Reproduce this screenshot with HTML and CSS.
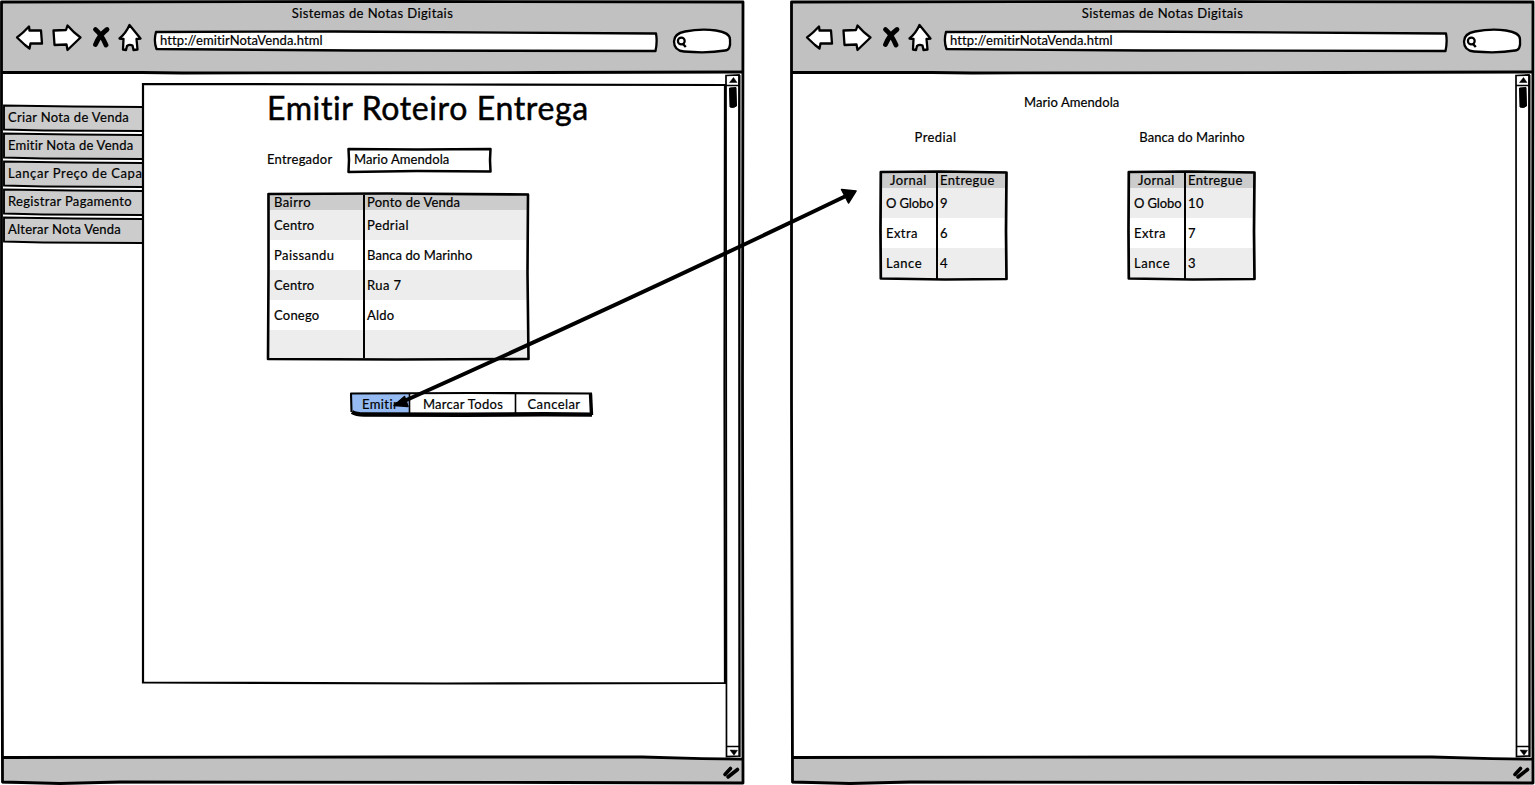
FILE: index.html
```
<!DOCTYPE html>
<html lang="pt-BR">
<head>
<meta charset="utf-8">
<title>Sistemas de Notas Digitais</title>
<link rel="stylesheet" href="styles.css">
</head>
<body>
<svg class="defs" width="0" height="0" aria-hidden="true">
  <defs>
    <symbol id="nav" viewBox="0 0 128 32" overflow="visible">
      <g fill="#fff" stroke="#000" stroke-width="2.3" stroke-linejoin="round" stroke-linecap="round">
        <path d="M2 16.500Q8 12 14 5.500L14.500 9.500 26 9.500 27 22.500 15.500 22.500 14.500 27.500 10 24Z"/>
        <path d="M38.500 9.500 51 9 52.500 4.500Q58 11 65.500 16.500L52.500 29 51.500 23.500 39.500 24Z"/>
        <path d="M104.500 17.500Q111 12 114.500 4L125.500 17.500 121.500 18 122.500 28.500 118.500 29 117.500 24.500Q114.500 23 112 25L111 29 108 28.500 108.500 18Z"/>
      </g>
      <path d="M80.500 8.500q6 5 10.500 15.500M92 8.500q-8 6-11.500 15" fill="none" stroke="#000" stroke-width="4.800" stroke-linecap="round"/>
    </symbol>
    <symbol id="url" viewBox="0 0 504 24" overflow="visible">
      <path d="M2 2 180 1.500 502 3.500q1.500 8-.5 17.500L200 20.500 2.500 19Q-.5 11 2 2Z" fill="#fff" stroke="#000" stroke-width="2.300" stroke-linejoin="round"/>
    </symbol>
    <symbol id="search" viewBox="0 0 60 26" overflow="visible">
      <path d="M13 3.500q16-3 31-1 14 2 14 9 1 11-5 11-17 3-41 1Q2 22.500 2 13.500 2 5.500 13 3.500Z" fill="#fff" stroke="#000" stroke-width="2.300"/>
      <circle cx="9.300" cy="13" r="3.400" fill="none" stroke="#000" stroke-width="2.200"/>
      <path d="m10.500 15.500 3.300 3.500" stroke="#000" stroke-width="2.500"/>
    </symbol>
    <symbol id="frame" viewBox="0 0 745 785" overflow="visible">
      <g fill="none" stroke="#000" stroke-width="2.800" stroke-linejoin="round">
        <path d="M1.500 2 400 1.500 743 2l-.5 380 .5 401L560 782.500 120 782 60 783.500 2.500 782 1.500 400Z"/>
        <path d="M2 72.500h140l40 .5 360-.5 201-.5"/>
        <path d="M2 757.500l400-.500h240l60 1.700 41 .5"/>
      </g>
    </symbol>
    <symbol id="scroll" viewBox="0 0 16 684" overflow="visible">
      <g fill="none" stroke="#000" stroke-width="1.700">
        <path d="M0 1.500 13 1l.5 681-13 .500ZM0 11.500h13.500M0 672.500h13.500"/>
      </g>
      <path d="M13.500 1v682" stroke="#000" stroke-width="2"/>
      <path d="M3.500 8.500 7.500 3.500 11 8.500ZM4 676l7.500 .300-3.500 5Z" stroke="#000" stroke-width=".5"/>
      <path d="M3.500 14 10 13.500l.5 18.500q-3 2.500-6.500 1Z" stroke="#000" stroke-linejoin="round"/>
    </symbol>
    <symbol id="grip" viewBox="0 0 18 14" overflow="visible">
      <path d="M3 9.500 8.500 3.500M6 12 15.500 4.500" stroke="#000" stroke-width="3.600" stroke-linecap="round"/>
    </symbol>
    <symbol id="item" viewBox="0 0 140 27" overflow="visible">
      <path d="M140 2 70 1.500 1 .5 1 24.500 40 25.500 140 26" fill="#ccc" stroke="#000" stroke-width="1.900"/>
    </symbol>
    <symbol id="small-table" viewBox="0 0 128 110" overflow="visible">
      <g fill="none" stroke="#000" stroke-linejoin="round">
        <path d="M.8 1 60 .5 126.500 1.500 126 60 126.500 108 65 108.500 .8 107.500 .5 60Z" stroke-width="2.700"/>
        <path d="M57 2v106" stroke-width="2"/>
      </g>
    </symbol>
  </defs>
</svg>

<main class="board">
  <section class="window">
    <header class="chrome">
      <div class="title">Sistemas de Notas Digitais</div>
      <div class="toolbar">
        <svg class="nav"><use href="#nav"/></svg>
        <div class="url"><svg class="ink"><use href="#url"/></svg><span>http://emitirNotaVenda.html</span></div>
        <svg class="search"><use href="#search"/></svg>
      </div>
    </header>
    <div class="content">
      <nav class="menu">
        <a class="item"><svg class="ink"><use href="#item"/></svg><span class="snug">Criar Nota de Venda</span></a>
        <a class="item"><svg class="ink"><use href="#item"/></svg><span class="tight">Emitir Nota de Venda</span></a>
        <a class="item"><svg class="ink"><use href="#item"/></svg><span class="wide">Lançar Preço de Capa</span></a>
        <a class="item"><svg class="ink"><use href="#item"/></svg><span class="snug">Registrar Pagamento</span></a>
        <a class="item"><svg class="ink"><use href="#item"/></svg><span class="tight">Alterar Nota Venda</span></a>
      </nav>
      <div class="panel">
        <svg class="ink" viewBox="0 0 584 601"><path d="M1 1 300 1.500 583 2l-.5 300 .5 298-280 .500L1 599.500 1 300Z" fill="none" stroke="#000" stroke-width="2.200"/></svg>
        <h1>Emitir Roteiro Entrega</h1>
        <div class="field">
          <label class="tight">Entregador</label>
          <div class="input"><svg class="ink" viewBox="0 0 145 26"><path d="M1.500 2 70 2.500 143.500 2 143 13 143.500 24.500 70 24 1.500 25 2 13Z" fill="#fff" stroke="#000" stroke-width="2.500" stroke-linejoin="round"/></svg><span class="tighter">Mario Amendola</span></div>
        </div>
        <div class="table route">
          <div class="row head"><span>Bairro</span><span class="tight">Ponto de Venda</span></div>
          <div class="row odd"><span class="tight">Centro</span><span>Pedrial</span></div>
          <div class="row"><span>Paissandu</span><span class="tighter">Banca do Marinho</span></div>
          <div class="row odd"><span class="tight">Centro</span><span>Rua 7</span></div>
          <div class="row"><span class="tight">Conego</span><span class="tight">Aldo</span></div>
          <div class="row odd last"><span></span><span></span></div>
          <svg class="ink" viewBox="0 0 262 168"><g fill="none" stroke="#000" stroke-linejoin="round"><path d="M1.500 1 120 .5 261 1.500 260.500 80 261.500 166 130 166.500 1 166 1.500 80Z" stroke-width="2.600"/><path d="M97 2v163" stroke-width="2"/></g></svg>
        </div>
        <div class="buttons">
          <svg class="ink" viewBox="0 0 244 26"><path d="M1.500 1.500 120 1 242 1.500 241 22.500H10L2 19Z" fill="#fff"/><path d="M2 2h58v20H10L2 19Z" fill="#95bbf2"/><g fill="none" stroke="#000" stroke-linejoin="round"><path d="M1.500 20 1 1.500 120 1 242 1.500" stroke-width="2.100"/><path d="M2 20q4 2.500 12 2.500l100 .300 80-.5 48 .300" stroke-width="4.400"/><path d="M240.500 1.500 241.500 23" stroke-width="3.400"/><path d="M59.500 2v20M165.500 2v20" stroke-width="1.600"/></g></svg>
          <span class="emitir">Emitir</span><span class="marcar">Marcar Todos</span><span class="cancelar">Cancelar</span>
        </div>
      </div>
      <svg class="scroll"><use href="#scroll"/></svg>
    </div>
    <footer class="status"><svg class="grip"><use href="#grip"/></svg></footer>
    <svg class="ink"><use href="#frame"/></svg>
  </section>

  <section class="window">
    <header class="chrome">
      <div class="title">Sistemas de Notas Digitais</div>
      <div class="toolbar">
        <svg class="nav"><use href="#nav"/></svg>
        <div class="url"><svg class="ink"><use href="#url"/></svg><span>http://emitirNotaVenda.html</span></div>
        <svg class="search"><use href="#search"/></svg>
      </div>
    </header>
    <div class="content">
      <div class="report">
        <div class="person"><span class="tighter">Mario Amendola</span></div>
        <div class="places">
          <div class="place">
            <div class="place-name">Predial</div>
            <div class="table delivery">
              <div class="row head"><span>Jornal</span><span>Entregue</span></div>
              <div class="row odd"><span class="globo">O Globo</span><span>9</span></div>
              <div class="row"><span>Extra</span><span>6</span></div>
              <div class="row odd"><span class="wide">Lance</span><span>4</span></div>
              <svg class="ink"><use href="#small-table"/></svg>
            </div>
          </div>
          <div class="place">
            <div class="place-name tighter">Banca do Marinho</div>
            <div class="table delivery">
              <div class="row head"><span>Jornal</span><span>Entregue</span></div>
              <div class="row odd"><span class="globo">O Globo</span><span>10</span></div>
              <div class="row"><span>Extra</span><span>7</span></div>
              <div class="row odd"><span class="wide">Lance</span><span>3</span></div>
              <svg class="ink"><use href="#small-table"/></svg>
            </div>
          </div>
        </div>
      </div>
      <svg class="scroll"><use href="#scroll"/></svg>
    </div>
    <footer class="status"><svg class="grip"><use href="#grip"/></svg></footer>
    <svg class="ink"><use href="#frame"/></svg>
  </section>

  <svg class="link" viewBox="0 0 1535 785">
    <path d="M402 402Q640 295 848 195" fill="none" stroke="#000" stroke-width="4"/>
    <path d="M394 405.500 404.500 396.500 408 406.500ZM856 191 841.500 189.500 848.500 203Z" stroke="#000" stroke-width="1.500" stroke-linejoin="round"/>
  </svg>
</main>
</body>
</html>
```
FILE: styles.css
```
* { box-sizing: border-box; }
body {
  margin: 0;
  background: #fff;
  color: #000;
  font: 13px/18px Lato, "Open Sans", sans-serif;
  letter-spacing: 0.42px;
  -webkit-text-stroke: 0.2px #000;
  overflow: hidden;
}
span, label, h1, .title, .place-name { white-space: nowrap; }
svg { display: block; overflow: visible; }
.defs { position: absolute; }
.board { position: relative; display: flex; gap: 45px; width: 1535px; height: 785px; }
.ink { position: absolute; inset: 0; width: 100%; height: 100%; pointer-events: none; }
.link { position: absolute; inset: 0; width: 1535px; height: 785px; pointer-events: none; }

.wide { letter-spacing: 0.57px; }
.snug { letter-spacing: 0.33px; }
.tight { letter-spacing: 0.23px; }
.tighter { letter-spacing: 0.08px; }
.globo { letter-spacing: -0.12px; }

.window { position: relative; display: grid; grid-template-rows: 73px 1fr 28px; width: 745px; height: 785px; }
.chrome { margin: 2px 2px 0; background: #c1c1c1; padding-top: 2px; }
.title { text-align: center; }
.toolbar { display: flex; padding-left: 13px; }
.nav { width: 128px; height: 32px; margin-top: -1px; }
.url { position: relative; width: 504px; height: 24px; margin: 8px 14px 0 11px; padding: 1px 0 0 6px; }
.url span { position: relative; display: block; letter-spacing: 0.1px; }
.search { width: 60px; height: 26px; margin-top: 6px; }
.content { display: flex; padding-left: 3px; }
.status { display: flex; justify-content: flex-end; margin: 0 2px 2px; padding: 7px 3px 0 0; background: #c1c1c1; }
.grip { width: 18px; height: 14px; }
.scroll { width: 16px; height: 684px; margin-top: 1px; }

.menu { display: flex; flex-direction: column; gap: 1px; width: 139px; padding-top: 32px; }
.item { position: relative; height: 27px; padding: 3px 0 0 5px; }
.item .ink { width: 140px; }
.item span { position: relative; display: block; }
.panel { position: relative; width: 584px; height: 601px; margin-top: 10px; padding-left: 125px; }
h1 { margin: 5px 0 0; font-size: 32px; line-height: 40px; font-weight: 400; letter-spacing: 0.62px; -webkit-text-stroke-width: 0.5px; }
.field { display: flex; gap: 14px; height: 26px; margin-top: 19px; line-height: 24px; }
.field label { width: 66px; }
.input { position: relative; width: 145px; padding-left: 7px; }
.input span { position: relative; }

.table { position: relative; }
.row { display: grid; height: 30px; line-height: 30px; }
.row span { position: relative; }
.head { height: 17px; line-height: 19px; background: #ccc; }
.odd { background: #ededed; }
.route { width: 262px; height: 168px; margin-top: 20px; }
.route .row { grid-template-columns: 93px 1fr; padding-left: 7px; }
.route .last { height: 29px; }
.buttons { position: relative; display: flex; width: 244px; height: 26px; margin: 31px 0 0 83px; line-height: 24px; text-align: center; }
.buttons span { position: relative; }
.emitir { width: 60px; }
.marcar { width: 106px; letter-spacing: 0.3px; }
.cancelar { width: 76px; }

.report { width: 723px; padding-top: 20px; }
.person { padding-left: 231px; }
.places { display: flex; gap: 120px; margin-top: 17px; padding-left: 87px; }
.place { width: 128px; }
.place-name { margin-bottom: 25px; text-align: center; }
.place:first-child .place-name { padding-right: 17px; }
.delivery { width: 128px; height: 110px; }
.delivery .row { grid-template-columns: 54px 1fr; width: 126px; padding-left: 6px; }
.delivery .head span:first-child { padding-left: 4px; }
```
